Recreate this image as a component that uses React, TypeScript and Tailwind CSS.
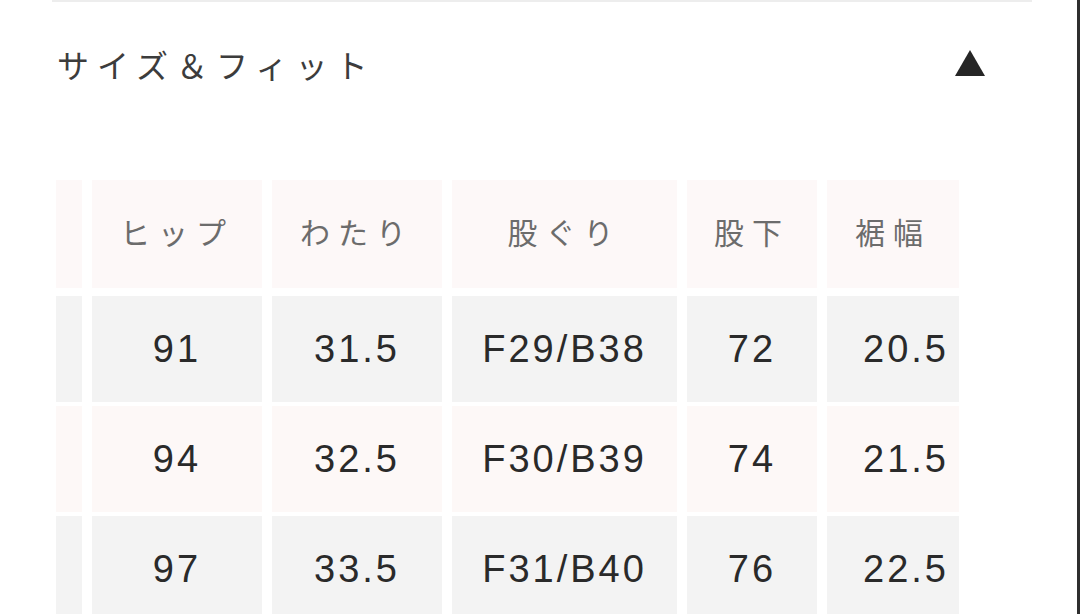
const headers = ['', 'ヒップ', 'わたり', '股ぐり', '股下', '裾幅'];

const rows = [
    ['', '91', '31.5', 'F29/B38', '72', '20.5'],
    ['', '94', '32.5', 'F30/B39', '74', '21.5'],
    ['', '97', '33.5', 'F31/B40', '76', '22.5'],
];

const cols = 'grid grid-cols-[26px_170px_170px_225px_130px_132px] gap-x-[10px]';

function Triangle() {
    return (
        <svg width="30" height="26" viewBox="0 0 30 26" className="mb-[3px]">
            <polygon points="15,0 30,26 0,26" fill="#262626" />
        </svg>
    );
}

export default function App() {
    return (
        <div className="w-[1080px] h-[614px] overflow-hidden bg-white relative border-r-[3px] border-[#2e2e2e]">
            <div className="mx-[52px] w-[980px] border-t-2 border-[#ededed]" />

            {/* accordion header */}
            <div className="flex items-center justify-between pl-[57px] pr-[92px] pt-[40px] h-[84px]">
                <h2
                    className="text-[32px] tracking-[8px] text-[#3c3c3c]"
                    style={{ fontFamily: '"Noto Sans CJK JP", sans-serif' }}
                >
                    サイズ＆フィット
                </h2>
                <Triangle />
            </div>

            {/* size table, scrolled sideways */}
            <div className="mt-[94px] ml-[56px] w-[903px] overflow-hidden">
                <div className={`${cols} h-[108px] mb-[8px]`}>
                    {headers.map((h, i) => (
                        <div
                            key={i}
                            className="bg-[#fdf8f8] flex items-center justify-center pb-[6px] text-[30px] tracking-[8px] text-[#6c6c6c]"
                            style={{ fontFamily: '"Noto Sans CJK JP", sans-serif' }}
                        >
                            {h}
                        </div>
                    ))}
                </div>

                <div className="flex flex-col gap-[4px]">
                    {rows.map((r, ri) => (
                        <div key={ri} className={`${cols} h-[106px]`}>
                            {r.map((v, ci) => (
                                <div
                                    key={ci}
                                    className={`${ri % 2 === 1 ? 'bg-[#fdf8f7]' : 'bg-[#f3f3f3]'} flex items-center justify-center text-[38px] tracking-[3px] text-[#2a2a2a] ${ci === 5 ? 'pl-[26px]' : ''}`}
                                    style={{ fontFamily: '"Liberation Sans", Arial, sans-serif' }}
                                >
                                    {v}
                                </div>
                            ))}
                        </div>
                    ))}
                </div>
            </div>
        </div>
    );
}
